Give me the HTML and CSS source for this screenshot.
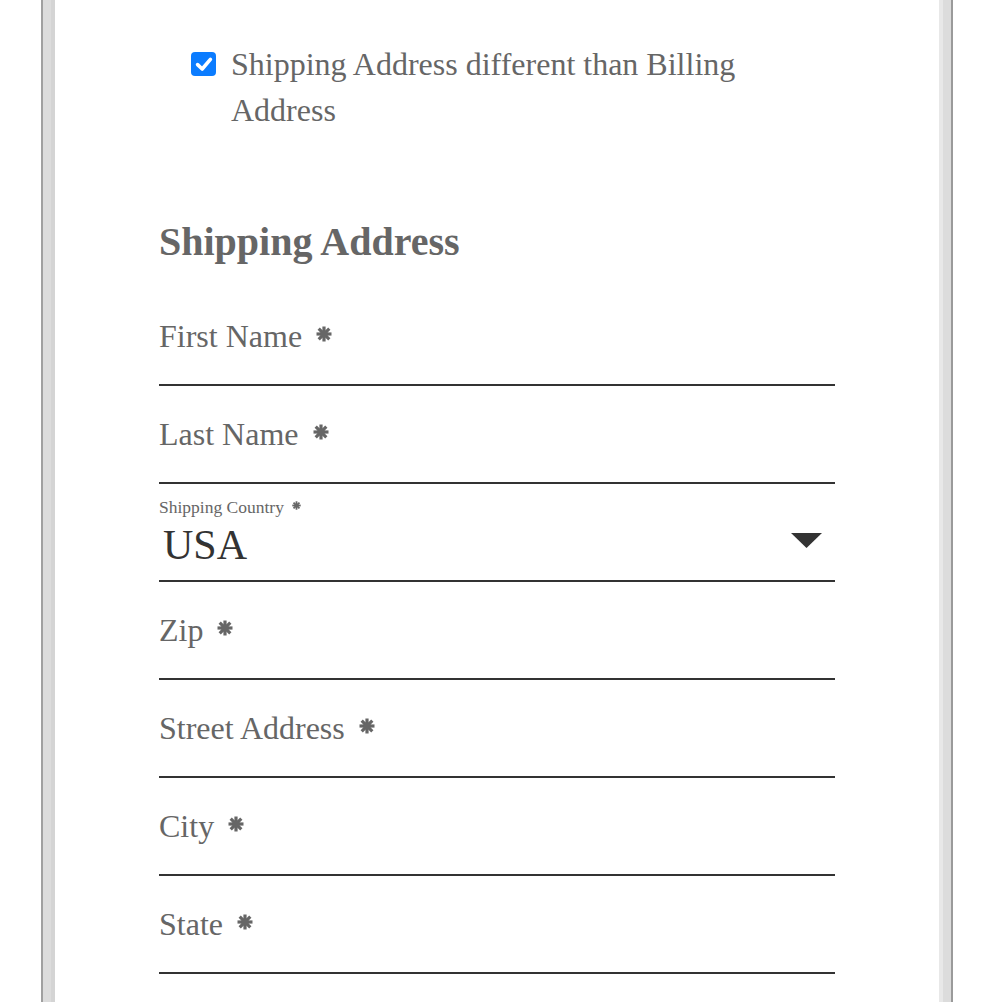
FILE: index.html
```
<!DOCTYPE html>
<html lang="en">
<head>
<meta charset="utf-8">
<title>Shipping Address</title>
<link rel="stylesheet" href="styles.css">
</head>
<body>
<div class="frame">
  <div class="content">
    <label class="check-row">
      <span class="check-box">
        <svg viewBox="0 0 24 24" width="24" height="24"><path d="M5.6 12.6 L10.2 17 L18.4 7.4" fill="none" stroke="#fff" stroke-width="3.6" stroke-linecap="round" stroke-linejoin="round"/></svg>
      </span>
      <span class="check-text">Shipping Address different than Billing Address</span>
    </label>

    <h2 class="heading">Shipping Address</h2>

    <div class="field">
      <span class="label">First Name</span>
      <svg class="req" viewBox="-8 -8 16 16"><g stroke="#666" stroke-width="3.2"><line x1="0" y1="-7.5" x2="0" y2="7.5"/><line x1="-7.5" y1="0" x2="7.5" y2="0"/><line x1="-5.3" y1="-5.3" x2="5.3" y2="5.3"/><line x1="-5.3" y1="5.3" x2="5.3" y2="-5.3"/></g><circle r="3.6" fill="#666"/></svg>
    </div>
    <div class="field">
      <span class="label">Last Name</span>
      <svg class="req" viewBox="-8 -8 16 16"><g stroke="#666" stroke-width="3.2"><line x1="0" y1="-7.5" x2="0" y2="7.5"/><line x1="-7.5" y1="0" x2="7.5" y2="0"/><line x1="-5.3" y1="-5.3" x2="5.3" y2="5.3"/><line x1="-5.3" y1="5.3" x2="5.3" y2="-5.3"/></g><circle r="3.6" fill="#666"/></svg>
    </div>
    <div class="field field-select">
      <div class="small-label">Shipping Country
        <svg class="req-small" viewBox="-8 -8 16 16"><g stroke="#666" stroke-width="3.2"><line x1="0" y1="-7.5" x2="0" y2="7.5"/><line x1="-7.5" y1="0" x2="7.5" y2="0"/><line x1="-5.3" y1="-5.3" x2="5.3" y2="5.3"/><line x1="-5.3" y1="5.3" x2="5.3" y2="-5.3"/></g><circle r="3.6" fill="#666"/></svg>
      </div>
      <div class="select-row">
        <span class="select-value">USA</span>
        <svg class="arrow" viewBox="0 0 31 15" width="31" height="15"><path d="M0 0 H31 L15.5 15 Z" fill="#333"/></svg>
      </div>
    </div>
    <div class="field">
      <span class="label">Zip</span>
      <svg class="req" viewBox="-8 -8 16 16"><g stroke="#666" stroke-width="3.2"><line x1="0" y1="-7.5" x2="0" y2="7.5"/><line x1="-7.5" y1="0" x2="7.5" y2="0"/><line x1="-5.3" y1="-5.3" x2="5.3" y2="5.3"/><line x1="-5.3" y1="5.3" x2="5.3" y2="-5.3"/></g><circle r="3.6" fill="#666"/></svg>
    </div>
    <div class="field">
      <span class="label">Street Address</span>
      <svg class="req" viewBox="-8 -8 16 16"><g stroke="#666" stroke-width="3.2"><line x1="0" y1="-7.5" x2="0" y2="7.5"/><line x1="-7.5" y1="0" x2="7.5" y2="0"/><line x1="-5.3" y1="-5.3" x2="5.3" y2="5.3"/><line x1="-5.3" y1="5.3" x2="5.3" y2="-5.3"/></g><circle r="3.6" fill="#666"/></svg>
    </div>
    <div class="field">
      <span class="label">City</span>
      <svg class="req" viewBox="-8 -8 16 16"><g stroke="#666" stroke-width="3.2"><line x1="0" y1="-7.5" x2="0" y2="7.5"/><line x1="-7.5" y1="0" x2="7.5" y2="0"/><line x1="-5.3" y1="-5.3" x2="5.3" y2="5.3"/><line x1="-5.3" y1="5.3" x2="5.3" y2="-5.3"/></g><circle r="3.6" fill="#666"/></svg>
    </div>
    <div class="field">
      <span class="label">State</span>
      <svg class="req" viewBox="-8 -8 16 16"><g stroke="#666" stroke-width="3.2"><line x1="0" y1="-7.5" x2="0" y2="7.5"/><line x1="-7.5" y1="0" x2="7.5" y2="0"/><line x1="-5.3" y1="-5.3" x2="5.3" y2="5.3"/><line x1="-5.3" y1="5.3" x2="5.3" y2="-5.3"/></g><circle r="3.6" fill="#666"/></svg>
    </div>
  </div>
</div>
</body>
</html>
```
FILE: styles.css
```
html, body {
  margin: 0;
  padding: 0;
  background: #fff;
  height: 1002px;
  overflow: hidden;
}

body {
  font-family: "Liberation Serif", "Times New Roman", serif;
  color: #666;
}

.frame {
  box-sizing: border-box;
  margin-left: 41px;
  width: 912px;
  height: 1002px;
  border-left: 2px solid #a0a0a0;
  border-right: 2px solid #9a9a9a;
  box-shadow:
    inset 8px 0 0 #dcdcdc,
    inset 12px 0 0 #d4d4d4,
    inset -8px 0 0 #dcdcdc,
    inset -12px 0 0 #e8e8e8;
  background: #fff;
  padding: 41px 116px 0 116px;
}

.content {
  display: flex;
  flex-direction: column;
}

.check-row {
  display: flex;
  align-items: flex-start;
  gap: 15px;
  margin-left: 32px;
  font-size: 32px;
  line-height: 46px;
}

.check-box {
  flex: none;
  width: 25px;
  height: 24px;
  margin-top: 11px;
  border-radius: 4px;
  background: #0b7cff;
  display: flex;
  justify-content: center;
}

.heading {
  margin: 85px 0 22px 0;
  font-size: 40px;
  line-height: 48px;
  font-weight: bold;
  color: #666;
}

.field {
  height: 96px;
  border-bottom: 2px solid #333;
  display: flex;
  align-items: center;
}

.label {
  font-size: 32px;
  line-height: 40px;
}

.req {
  width: 16px;
  height: 16px;
  margin-left: 14px;
  margin-top: -4px;
}

.field-select {
  flex-direction: column;
  align-items: stretch;
  justify-content: flex-start;
  padding-top: 13px;
  box-sizing: border-box;
  height: 98px;
}

.small-label {
  font-size: 17.5px;
  line-height: 20px;
  display: flex;
  align-items: center;
}

.req-small {
  width: 9px;
  height: 9px;
  margin-left: 8px;
  margin-top: -3px;
}

.select-row {
  display: flex;
  align-items: center;
  justify-content: space-between;
  height: 50px;
}

.select-value {
  font-size: 42px;
  line-height: 50px;
  padding-top: 6px;
  color: #333;
  padding-left: 4px;
}

.arrow {
  margin-right: 13px;
  margin-top: -3px;
}
```
